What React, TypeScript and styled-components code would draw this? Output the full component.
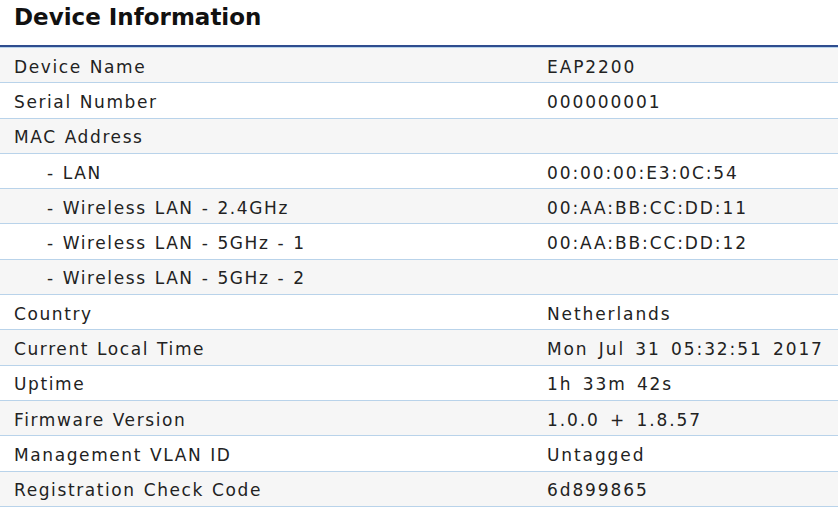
import React from "react";
import styled, { createGlobalStyle } from "styled-components";

const Global = createGlobalStyle`
  html, body { margin: 0; padding: 0; background: #ffffff; }
  body { font-family: Verdana, "DejaVu Sans", sans-serif; color: #222; }
`;

const Page = styled.div`
  width: 838px;
  display: flex;
  flex-direction: column;
`;

const Title = styled.h1`
  margin: 0;
  padding: 4px 0 0 14px;
  height: 45px;
  box-sizing: border-box;
  font-size: 23px;
  font-weight: bold;
  color: #111;
  line-height: 26px;
`;

const Table = styled.div`
  border-top: 2px solid #2f4d8f;
  box-shadow: inset 0 1px 0 #b9d3ea;
  padding-top: 1px;
  display: flex;
  flex-direction: column;
`;

const Row = styled.div<{ $alt: boolean }>`
  display: grid;
  grid-template-columns: 547px 1fr;
  height: 34.3px;
  align-items: center;
  background: ${(p) => (p.$alt ? "#f6f6f6" : "#ffffff")};
  border-bottom: 1px solid #b9d3ea;
  font-size: 17px;
  color: #222;
`;

const Label = styled.div<{ $indent: boolean }>`
  padding: 3px 0 0 ${(p) => (p.$indent ? "47px" : "14px")};
  letter-spacing: 1.6px;
  word-spacing: 1px;
  white-space: pre;
`;

const Value = styled.div`
  padding-top: 3px;
  letter-spacing: 1.9px;
  word-spacing: 3px;
  white-space: pre;
`;

const rows: [string, string, boolean?][] = [
  ["Device Name", "EAP2200"],
  ["Serial Number", "000000001"],
  ["MAC Address", ""],
  ["- LAN", "00:00:00:E3:0C:54", true],
  ["- Wireless LAN - 2.4GHz", "00:AA:BB:CC:DD:11", true],
  ["- Wireless LAN - 5GHz - 1", "00:AA:BB:CC:DD:12", true],
  ["- Wireless LAN - 5GHz - 2", "", true],
  ["Country", "Netherlands"],
  ["Current Local Time", "Mon Jul 31 05:32:51 2017"],
  ["Uptime", "1h 33m 42s"],
  ["Firmware Version", "1.0.0 + 1.8.57"],
  ["Management VLAN ID", "Untagged"],
  ["Registration Check Code", "6d899865"],
];

export default function App() {
  return (
    <Page>
      <Global />
      <Title>Device Information</Title>
      <Table>
        {rows.map(([l, v, ind], i) => (
          <Row key={i} $alt={i % 2 === 0}>
            <Label $indent={!!ind}>{l}</Label>
            <Value>{v}</Value>
          </Row>
        ))}
      </Table>
    </Page>
  );
}
